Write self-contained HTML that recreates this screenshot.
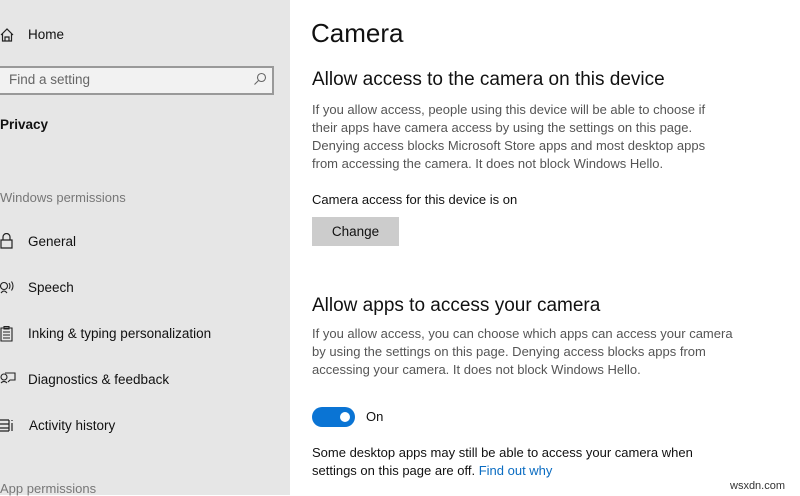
<!DOCTYPE html>
<html><head><meta charset="utf-8"><style>
*{margin:0;padding:0;box-sizing:border-box}
body{width:800px;height:495px;overflow:hidden;background:#fff;font-family:"Liberation Sans",sans-serif;color:#000;position:relative}
.sb{position:absolute;left:0;top:0;width:290px;height:495px;background:#e6e6e6}
.a{position:absolute;white-space:nowrap}
.n{font-size:13.5px;color:#111}
.g{font-size:13px;color:#777}
.p{font-size:13px;color:#555;line-height:18px}
.h{font-size:19px;color:#111}
svg{position:absolute}
</style></head><body>
<div class="sb"></div>
<svg style="left:0;top:27px" width="16" height="16" viewBox="0 0 16 16" fill="none" stroke="#222" stroke-width="1.2"><path d="M1 8 L7 2 L13 8 M2.5 6.5 V14 H11.5 V6.5 M5 14 V10 H9 V14"/></svg>
<div class="a n" style="left:28px;top:27px">Home</div>
<div class="a" style="left:-2px;top:66px;width:276px;height:29px;border:2px solid #999;background:#f2f2f2"></div>
<div class="a" style="left:9px;top:72px;font-size:13.5px;color:#666">Find a setting</div>
<svg style="left:253px;top:72px" width="14" height="14" viewBox="0 0 14 14" fill="none" stroke="#666" stroke-width="1.1"><circle cx="8.5" cy="5.5" r="4"/><path d="M5.5 8.5 L1.5 12.5"/></svg>
<div class="a" style="left:0;top:117px;font-size:13.5px;font-weight:bold;color:#111">Privacy</div>
<div class="a g" style="left:0;top:190px">Windows permissions</div>
<svg style="left:0;top:233px" width="14" height="16" viewBox="0 0 14 16" fill="none" stroke="#222" stroke-width="1.2"><path d="M3 7 V4 a3.5 3.5 0 0 1 7 0 V7 M1 7 H12 V15 H1 Z"/></svg>
<div class="a n" style="left:28px;top:234px">General</div>
<svg style="left:0;top:280px" width="16" height="16" viewBox="0 0 16 16" fill="none" stroke="#222" stroke-width="1.1"><circle cx="4" cy="6" r="3.5"/><path d="M1 13 Q4 9 7 13 M9 3 Q11 6 9 9 M11.5 1.5 Q14.5 6 11.5 10.5"/></svg>
<div class="a n" style="left:28px;top:280px">Speech</div>
<svg style="left:0;top:325px" width="14" height="17" viewBox="0 0 14 17" fill="none" stroke="#222" stroke-width="1.1"><path d="M1 3 H12 V16 H1 Z M4 1.5 H9 V4 H4 Z M3 7 H10 M3 10 H10 M3 13 H10"/></svg>
<div class="a n" style="left:28px;top:326px">Inking &amp; typing personalization</div>
<svg style="left:0;top:371px" width="16" height="16" viewBox="0 0 16 16" fill="none" stroke="#222" stroke-width="1.1"><circle cx="4" cy="6" r="3"/><path d="M1 12 Q4 9 7 12 M5 2 H15 V9 H10 L8 11"/></svg>
<div class="a n" style="left:28px;top:372px">Diagnostics &amp; feedback</div>
<svg style="left:0;top:417px" width="16" height="16" viewBox="0 0 16 16" fill="none" stroke="#222" stroke-width="1.2"><path d="M0 3 H9 M0 7 H9 M0 11 H9 M0 14 H9 M9 3 V14 M12 3 V4 M12 6 V14"/></svg>
<div class="a n" style="left:29px;top:418px">Activity history</div>
<div class="a g" style="left:0;top:481px">App permissions</div>

<div class="a" style="left:311px;top:18px;font-size:26px;color:#111">Camera</div>
<div class="a h" style="left:312px;top:69px">Allow access to the camera on this device</div>
<div class="a p" style="left:312px;top:101px">If you allow access, people using this device will be able to choose if<br>their apps have camera access by using the settings on this page.<br>Denying access blocks Microsoft Store apps and most desktop apps<br>from accessing the camera. It does not block Windows Hello.</div>
<div class="a n" style="left:312px;top:192px;font-size:13px">Camera access for this device is on</div>
<div class="a" style="left:312px;top:217px;width:87px;height:29px;background:#cccccc;font-size:13.5px;color:#111;text-align:center;line-height:29px">Change</div>
<div class="a h" style="left:312px;top:295px">Allow apps to access your camera</div>
<div class="a p" style="left:312px;top:325px">If you allow access, you can choose which apps can access your camera<br>by using the settings on this page. Denying access blocks apps from<br>accessing your camera. It does not block Windows Hello.</div>
<div class="a" style="left:312px;top:407px;width:43px;height:20px;border-radius:10px;background:#0a74d4"></div>
<div class="a" style="left:340px;top:412px;width:10px;height:10px;border-radius:5px;background:#fff"></div>
<div class="a n" style="left:366px;top:409px;font-size:13px">On</div>
<div class="a p" style="left:312px;top:444px;color:#111">Some desktop apps may still be able to access your camera when<br>settings on this page are off. <span style="color:#0a6cc2">Find out why</span></div>
<div class="a" style="left:730px;top:480px;font-size:11px;color:#333">wsxdn.com</div>
</body></html>
